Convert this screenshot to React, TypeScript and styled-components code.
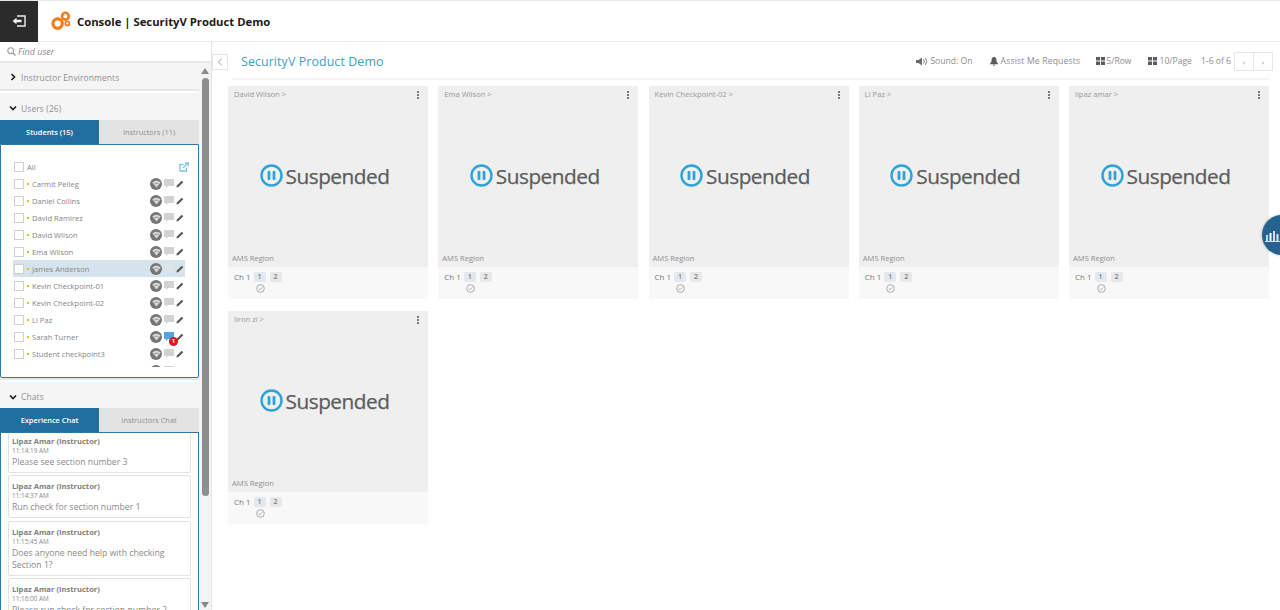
import React from 'react';
import styled, { createGlobalStyle } from 'styled-components';

const GlobalStyle = createGlobalStyle`
  html, body {
    margin: 0;
    padding: 0;
    height: 100%;
    overflow: hidden;
    background: #fff;
    font-family: "Open Sans", "Liberation Sans", sans-serif;
  }
  * { box-sizing: border-box; }
`;

const Page = styled.div`
  width: 1280px;
  height: 610px;
  display: flex;
  flex-direction: column;
  position: relative;
  overflow: hidden;
`;
const TopBar = styled.header`
  height: 42px;
  flex: none;
  display: flex;
  align-items: center;
  border-top: 1px solid #e6e6e6;
  border-bottom: 1px solid #ececec;
  background: #fff;
`;
const ExitButton = styled.div`
  width: 38px;
  height: 41px;
  background: #2b2b2b;
  display: flex;
  align-items: center;
  justify-content: center;
`;
const Logo = styled.svg`
  margin-left: 13px;
  width: 20px;
  height: 20px;
`;
const Title = styled.div`
  margin-left: 6px;
  font-size: 11.3px;
  font-weight: 700;
  color: #1b1b1b;
  white-space: nowrap;
`;
const Body = styled.div`
  flex: 1;
  min-height: 0;
  display: flex;
`;
const Sidebar = styled.aside`
  width: 212px;
  flex: none;
  display: flex;
  flex-direction: column;
  border-right: 1px solid #e6e6e6;
  overflow: hidden;
`;
const SearchRow = styled.div`
  height: 21px;
  flex: none;
  display: flex;
  align-items: center;
  gap: 2px;
  padding-left: 7px;
  font-size: 9px;
  font-style: italic;
  color: #8a8a8a;
  border-bottom: 2px solid #e6e8e8;
`;
const SideBody = styled.div`
  flex: 1;
  min-height: 0;
  display: flex;
`;
const SideColumn = styled.div`
  width: 199px;
  flex: none;
  display: flex;
  flex-direction: column;
`;
const ScrollTrack = styled.div`
  flex: 1;
  position: relative;
  display: flex;
  flex-direction: column;
  align-items: center;
  padding-top: 5px;
  background: #f3f3f3;
`;
const ScrollThumb = styled.div`
  width: 7px;
  height: 418px;
  margin-top: 4px;
  border-radius: 4px;
  background: #8d8d8d;
`;
const ScrollArrow = styled.div<{ $down?: boolean }>`
  width: 0;
  height: 0;
  border-left: 4px solid transparent;
  border-right: 4px solid transparent;
  ${(p) => (p.$down ? 'border-top: 6px solid #8a8a8a; position: absolute; bottom: 2px;' : 'border-bottom: 6px solid #8a8a8a;')}
`;
const SectionHead = styled.div<{ $h: number; $pt: number }>`
  height: ${(p) => p.$h}px;
  padding-top: ${(p) => p.$pt}px;
  flex: none;
  display: flex;
  align-items: center;
  gap: 4px;
  padding-left: 9px;
  background: #f5f5f5;
  font-size: 8.4px;
  color: #8e8e8e;
  letter-spacing: 0.15px;
`;
const SectionGap = styled.div`
  height: 4px;
  flex: none;
  background: #fff;
  border-top: 2px solid #e8e8e8;
`;
const Tabs = styled.div`
  height: 24px;
  flex: none;
  display: flex;
`;
const Tab = styled.div<{ $active?: boolean }>`
  flex: ${(p) => (p.$active ? '0 0 99px' : '1')};
  display: flex;
  align-items: center;
  justify-content: center;
  font-size: 7.4px;
  font-weight: ${(p) => (p.$active ? 600 : 400)};
  color: ${(p) => (p.$active ? '#fff' : '#8f8f8f')};
  background: ${(p) => (p.$active ? '#1f6f9f' : '#e4e3e3')};
`;
const UserBox = styled.div`
  height: 234px;
  flex: none;
  border: 1px solid #2f77a8;
  border-radius: 0 0 2px 2px;
  padding: 13px 13px 0 12px;
`;
const UserScroll = styled.div`
  height: 209px;
  overflow-x: visible;
  overflow-y: clip;
`;
const UserRow = styled.div<{ $selected?: boolean }>`
  height: 17px;
  display: flex;
  align-items: center;
  background: ${(p) => (p.$selected ? '#d5e4ec' : 'transparent')};
  font-size: 7.6px;
  color: #858585;
`;
const Check = styled.span`
  width: 10px;
  height: 10px;
  margin-left: 1px;
  flex: none;
  background: #fff;
  border: 1px solid #d0d0d0;
`;
const Dot = styled.span`
  width: 2px;
  height: 2px;
  margin: 0 3px 0 3px;
  flex: none;
  background: #e4c400;
`;
const UserName = styled.span`
  flex: 1;
  white-space: nowrap;
`;
const AllLabel = styled.span`
  flex: 1;
  margin-left: 3px;
`;
const RowIcons = styled.span`
  display: flex;
  align-items: center;
  margin-right: 1px;
  position: relative;
`;
const WifiDisc = styled.span`
  width: 12px;
  height: 12px;
  border-radius: 50%;
  background: #757575;
  display: flex;
  align-items: center;
  justify-content: center;
`;
const Badge = styled.span`
  position: absolute;
  left: 19px;
  top: 6px;
  width: 9px;
  height: 9px;
  border-radius: 50%;
  background: #e8141c;
  color: #fff;
  font-size: 6px;
  font-weight: 700;
  line-height: 9px;
  text-align: center;
`;
const ChatBox = styled.div`
  flex: 1;
  min-height: 0;
  border: 1px solid #2f77a8;
  border-bottom: none;
  padding: 0 7px;
  overflow: hidden;
`;
const ChatCard = styled.div`
  border: 1px solid #e2e2e2;
  border-radius: 2px;
  padding: 5px 4px 4px 3px;
  margin-bottom: 2.4px;
  color: #8a8a8a;
  &:first-child {
    border-top: none;
    padding-top: 3px;
  }
`;
const ChatAuthor = styled.div`
  font-size: 7.6px;
  font-weight: 700;
  line-height: 11px;
  color: #808080;
`;
const ChatTime = styled.div`
  font-size: 6.4px;
  line-height: 7px;
  margin-bottom: 2px;
`;
const ChatText = styled.div`
  font-size: 8.7px;
  line-height: 12px;
`;
const Main = styled.main`
  flex: 1;
  min-width: 0;
  padding-right: 11px;
`;
const MainHead = styled.div`
  height: 38px;
  display: flex;
  align-items: center;
  background: linear-gradient(#f4f4f4, #f4f4f4) no-repeat 20px 100% / calc(100% - 20px) 2px;
`;
const Collapse = styled.div`
  width: 16px;
  height: 16px;
  border: 1px solid #e4e4e4;
  display: flex;
  align-items: center;
  justify-content: center;
  margin-top: 1px;
`;
const PageTitle = styled.div`
  margin-left: 13px;
  font-size: 12.4px;
  color: #3e9fc4;
  flex: 1;
  letter-spacing: 0.1px;
`;
const HeadItem = styled.div<{ $gap: number; $iconGap?: number; $track?: number }>`
  display: flex;
  align-items: center;
  gap: ${(p) => p.$iconGap ?? 2}px;
  margin-left: ${(p) => p.$gap}px;
  font-size: 8.6px;
  letter-spacing: ${(p) => p.$track ?? 0}px;
  color: #8d8d8d;
  white-space: nowrap;
`;
const Pager = styled.div`
  margin-left: 3px;
  margin-right: -4px;
  display: flex;
  width: 39px;
  height: 19px;
  border: 1px solid #e6e6e6;
`;
const PagerBtn = styled.div`
  flex: 1;
  display: flex;
  align-items: center;
  justify-content: center;
  font-size: 8px;
  color: #8a8a8a;
  & + & {
    border-left: 1px solid #e6e6e6;
  }
`;
const Grid = styled.div`
  display: grid;
  grid-template-columns: repeat(5, 200px);
  column-gap: 10.25px;
  row-gap: 12px;
  padding: 6px 0 0 16px;
`;
const Card = styled.div`
  height: 213px;
  display: flex;
  flex-direction: column;
`;
const Screen = styled.div`
  height: 181px;
  flex: none;
  background: #efefef;
  position: relative;
  display: flex;
  align-items: center;
  justify-content: center;
  padding: 0 7px 2px 0;
`;
const CardName = styled.div`
  position: absolute;
  left: 6px;
  top: 3px;
  font-size: 7.6px;
  color: #979797;
`;
const Kebab = styled.div`
  position: absolute;
  right: 9px;
  top: 5px;
  display: flex;
  flex-direction: column;
  gap: 1px;
  & > span {
    width: 2px;
    height: 2px;
    background: #7a7a7a;
  }
`;
const Region = styled.div`
  position: absolute;
  left: 4px;
  bottom: 4px;
  font-size: 7.6px;
  color: #8e8e8e;
`;
const SuspendedWrap = styled.div`
  display: flex;
  align-items: center;
  gap: 3px;
`;
const SuspendedText = styled.span`
  font-size: 20.8px;
  color: #5c5c5c;
  letter-spacing: -0.5px;
  -webkit-text-stroke: 0.25px #5c5c5c;
`;
const Foot = styled.div`
  flex: 1;
  background: #f8f8f8;
  padding: 5px 0 0 6px;
  display: flex;
  align-items: flex-start;
  font-size: 8px;
  color: #757575;
`;
const ChLabel = styled.span`
  line-height: 10px;
  margin-right: 3px;
`;
const ChannelCol = styled.div`
  display: flex;
  flex-direction: column;
  align-items: flex-start;
`;
const ChannelBtns = styled.div`
  display: flex;
  gap: 4px;
`;
const ChannelBtn = styled.span<{ $on?: boolean }>`
  width: 12px;
  height: 10px;
  border-radius: 2px;
  background: ${(p) => (p.$on ? '#e3e8ee' : '#e8e8e8')};
  font-size: 7px;
  font-weight: 600;
  line-height: 10px;
  text-align: center;
  color: #767b7f;
`;
const Floating = styled.div`
  position: absolute;
  left: 1262px;
  top: 215px;
  width: 40px;
  height: 40px;
  border-radius: 50%;
  background: #26628f;
  box-shadow: 0 0 3px rgba(0, 0, 0, 0.3);
  display: flex;
  align-items: center;
  padding-left: 3px;
`;

const Caret = ({ open }: { open?: boolean }) => (
  <svg width="8" height="8" viewBox="0 0 8 8">
    <path d={open ? 'M1 2.5 L4 5.5 L7 2.5' : 'M2.5 1 L5.5 4 L2.5 7'} fill="none" stroke="#222" strokeWidth="1.7" />
  </svg>
);

const Wifi = () => (
  <svg width="9" height="8" viewBox="0 0 9 8">
    <path d="M0.3 2.6 C3 0 6 0 8.7 2.6 L4.5 7.5 Z" fill="#d8d8d8" />
    <path d="M2.3 3.9 C3.6 3 5.4 3 6.7 3.9" fill="none" stroke="#757575" strokeWidth="0.7" />
  </svg>
);

const Bubble = ({ color }: { color: string }) => (
  <svg width="10" height="10" viewBox="0 0 10 10" style={{ marginLeft: 2 }}>
    <path d="M0 0 H10 V7 H4 L2.3 9.5 V7 H0 Z" fill={color} />
  </svg>
);

const Pencil = () => (
  <svg width="8" height="8" viewBox="0 0 9 9" style={{ marginLeft: 2 }}>
    <path d="M0.5 8.5 L1 6.3 L6.5 0.8 L8.2 2.5 L2.7 8 Z" fill="#555" />
  </svg>
);

const Grid4 = () => (
  <svg width="9" height="8" viewBox="0 0 9 8">
    <path d="M0 0 H4 V3.5 H0 Z M5 0 H9 V3.5 H5 Z M0 4.5 H4 V8 H0 Z M5 4.5 H9 V8 H5 Z" fill="#5c5c5c" />
  </svg>
);

const students = [
  'Carmit Pelleg',
  'Daniel Collins',
  'David Ramirez',
  'David Wilson',
  'Ema Wilson',
  'James Anderson',
  'Kevin Checkpoint-01',
  'Kevin Checkpoint-02',
  'Li Paz',
  'Sarah Turner',
  'Student checkpoint3',
];

const chats = [
  { time: '11:14:19 AM', text: 'Please see section number 3' },
  { time: '11:14:37 AM', text: 'Run check for section number 1' },
  { time: '11:15:45 AM', text: 'Does anyone need help with checking Section 1?' },
  { time: '11:16:00 AM', text: 'Please run check for section number 2' },
];

const cards = ['David Wilson >', 'Ema Wilson >', 'Kevin Checkpoint-02 >', 'Li Paz >', 'lipaz amar >', 'liron zi >'];

function App() {
  return (
    <Page>
      <GlobalStyle />
      <TopBar>
        <ExitButton>
          <svg width="14" height="12" viewBox="0 0 14 12">
            <path d="M5 1 H13 V11 H5" fill="none" stroke="#f0f0f0" strokeWidth="1.4" />
            <path d="M0.5 6 L4.5 2.8 V4.7 H9.5 V7.3 H4.5 V9.2 Z" fill="#f0f0f0" />
          </svg>
        </ExitButton>
        <Logo viewBox="0 0 20 20">
          <circle cx="6.6" cy="12.6" r="4.7" fill="none" stroke="#f07d1a" strokeWidth="3.2" />
          <circle cx="14.4" cy="5.2" r="3.4" fill="none" stroke="#f07d1a" strokeWidth="2.6" />
          <circle cx="16.4" cy="12.4" r="2" fill="none" stroke="#f07d1a" strokeWidth="1.8" />
        </Logo>
        <Title>Console | SecurityV Product Demo</Title>
      </TopBar>
      <Body>
        <Sidebar>
          <SearchRow>
            <svg width="9" height="9" viewBox="0 0 9 9">
              <circle cx="3.7" cy="3.7" r="2.9" fill="none" stroke="#a0a0a0" strokeWidth="1.1" />
              <path d="M5.8 5.8 L8.5 8.5" stroke="#a0a0a0" strokeWidth="1.3" />
            </svg>
            Find user
          </SearchRow>
          <SideBody>
            <SideColumn>
              <SectionHead $h={26} $pt={2}>
                <Caret />
                Instructor Environments
              </SectionHead>
              <SectionGap />
              <SectionHead $h={27} $pt={3}>
                <Caret open />
                Users (26)
              </SectionHead>
              <Tabs>
                <Tab $active>Students (15)</Tab>
                <Tab>Instructors (11)</Tab>
              </Tabs>
              <UserBox>
                <UserScroll>
                  <UserRow>
                    <Check />
                    <AllLabel>All</AllLabel>
                    <svg width="10" height="10" viewBox="0 0 10 10" style={{ marginRight: -4 }}>
                      <path d="M7.5 5.5 V9 H1 V2.5 H4.5" fill="none" stroke="#7cc4e4" strokeWidth="1.3" />
                      <path d="M4 6 L8.5 1.5 M5.8 0.8 H9.2 V4.2" fill="none" stroke="#7cc4e4" strokeWidth="1.3" />
                    </svg>
                  </UserRow>
                  {students.map((name) => (
                    <UserRow key={name} $selected={name === 'James Anderson'}>
                      <Check />
                      <Dot />
                      <UserName>{name}</UserName>
                      <RowIcons>
                        <WifiDisc>
                          <Wifi />
                        </WifiDisc>
                        <Bubble color={name === 'Sarah Turner' ? '#56a3e0' : name === 'James Anderson' ? '#e0e4e6' : '#d2d2d2'} />
                        <Pencil />
                        {name === 'Sarah Turner' && <Badge>1</Badge>}
                      </RowIcons>
                    </UserRow>
                  ))}
                  <UserRow>
                    <UserName />
                    <RowIcons>
                      <WifiDisc />
                      <Bubble color="#d2d2d2" />
                      <Pencil />
                    </RowIcons>
                  </UserRow>
                </UserScroll>
              </UserBox>
              <SectionGap />
              <SectionHead $h={26} $pt={3}>
                <Caret open />
                Chats
              </SectionHead>
              <Tabs>
                <Tab $active>Experience Chat</Tab>
                <Tab>Instructors Chat</Tab>
              </Tabs>
              <ChatBox>
                {chats.map((c) => (
                  <ChatCard key={c.time}>
                    <ChatAuthor>Lipaz Amar (Instructor)</ChatAuthor>
                    <ChatTime>{c.time}</ChatTime>
                    <ChatText>{c.text}</ChatText>
                  </ChatCard>
                ))}
              </ChatBox>
            </SideColumn>
            <ScrollTrack>
              <ScrollArrow />
              <ScrollThumb />
              <ScrollArrow $down />
            </ScrollTrack>
          </SideBody>
        </Sidebar>
        <Main>
          <MainHead>
            <Collapse>
              <svg width="6" height="8" viewBox="0 0 6 8">
                <path d="M5 0.5 L1.2 4 L5 7.5" fill="none" stroke="#a8a8a8" strokeWidth="1" />
              </svg>
            </Collapse>
            <PageTitle>SecurityV Product Demo</PageTitle>
            <HeadItem $gap={0} $iconGap={1}>
              <svg width="13" height="9" viewBox="0 0 13 9">
                <path d="M0 3 H2.5 L6 0.5 V8.5 L2.5 6 H0 Z" fill="#6a6a6a" />
                <path d="M7.5 2.5 Q9 4.5 7.5 6.5 M9.5 1.2 Q12 4.5 9.5 7.8" fill="none" stroke="#6a6a6a" strokeWidth="0.9" />
              </svg>
              Sound: On
            </HeadItem>
            <HeadItem $gap={17} $iconGap={3} $track={0.17}>
              <svg width="8" height="9" viewBox="0 0 8 9">
                <path d="M4 0 C6 0 6.5 1.8 6.5 3.5 C6.5 5 7.2 5.8 8 6.6 V7.2 H0 V6.6 C0.8 5.8 1.5 5 1.5 3.5 C1.5 1.8 2 0 4 0 Z M3 7.8 H5 C5 9.2 3 9.2 3 7.8 Z" fill="#5c5c5c" />
              </svg>
              Assist Me Requests
            </HeadItem>
            <HeadItem $gap={16} $iconGap={1}>
              <Grid4 />
              5/Row
            </HeadItem>
            <HeadItem $gap={16} $iconGap={3}>
              <Grid4 />
              10/Page
            </HeadItem>
            <HeadItem $gap={9}>1-6 of 6</HeadItem>
            <Pager>
              <PagerBtn>‹</PagerBtn>
              <PagerBtn>›</PagerBtn>
            </Pager>
          </MainHead>
          <Grid>
            {cards.map((name) => (
              <Card key={name}>
                <Screen>
                  <CardName>{name}</CardName>
                  <Kebab>
                    <span />
                    <span />
                    <span />
                  </Kebab>
                  <SuspendedWrap>
                    <svg width="23" height="23" viewBox="0 0 23 23">
                      <circle cx="11.5" cy="11.5" r="10" fill="none" stroke="#2ea3d8" strokeWidth="2.4" />
                      <rect x="7.6" y="7" width="2.8" height="9" rx="0.8" fill="#2ea3d8" />
                      <rect x="12.6" y="7" width="2.8" height="9" rx="0.8" fill="#2ea3d8" />
                    </svg>
                    <SuspendedText>Suspended</SuspendedText>
                  </SuspendedWrap>
                  <Region>AMS Region</Region>
                </Screen>
                <Foot>
                  <ChLabel>Ch 1</ChLabel>
                  <ChannelCol>
                    <ChannelBtns>
                      <ChannelBtn $on>1</ChannelBtn>
                      <ChannelBtn>2</ChannelBtn>
                    </ChannelBtns>
                    <svg width="9" height="9" viewBox="0 0 9 9" style={{ margin: '2px 0 0 2px' }}>
                      <circle cx="4.5" cy="4.5" r="3.8" fill="none" stroke="#8a8a8a" strokeWidth="0.7" />
                      <path d="M2.7 4.6 L4 5.8 L6.3 3.4" fill="none" stroke="#8a8a8a" strokeWidth="0.7" />
                    </svg>
                  </ChannelCol>
                </Foot>
              </Card>
            ))}
          </Grid>
        </Main>
      </Body>
      <Floating>
        <svg width="15" height="13" viewBox="0 0 15 13">
          <path d="M1 12 V6 H3 V12 Z" fill="#a8e0e8" />
          <path d="M4.5 12 V4 H6.5 V12 Z" fill="#ffffff" />
          <path d="M8 12 V2 H10 V12 Z" fill="#f0d0e0" />
          <path d="M11.5 12 V5 H13.5 V12 Z" fill="#d8e4f0" />
          <path d="M0 12 H15 V13 H0 Z" fill="#cfe8f0" />
        </svg>
      </Floating>
    </Page>
  );
}

export default App;
